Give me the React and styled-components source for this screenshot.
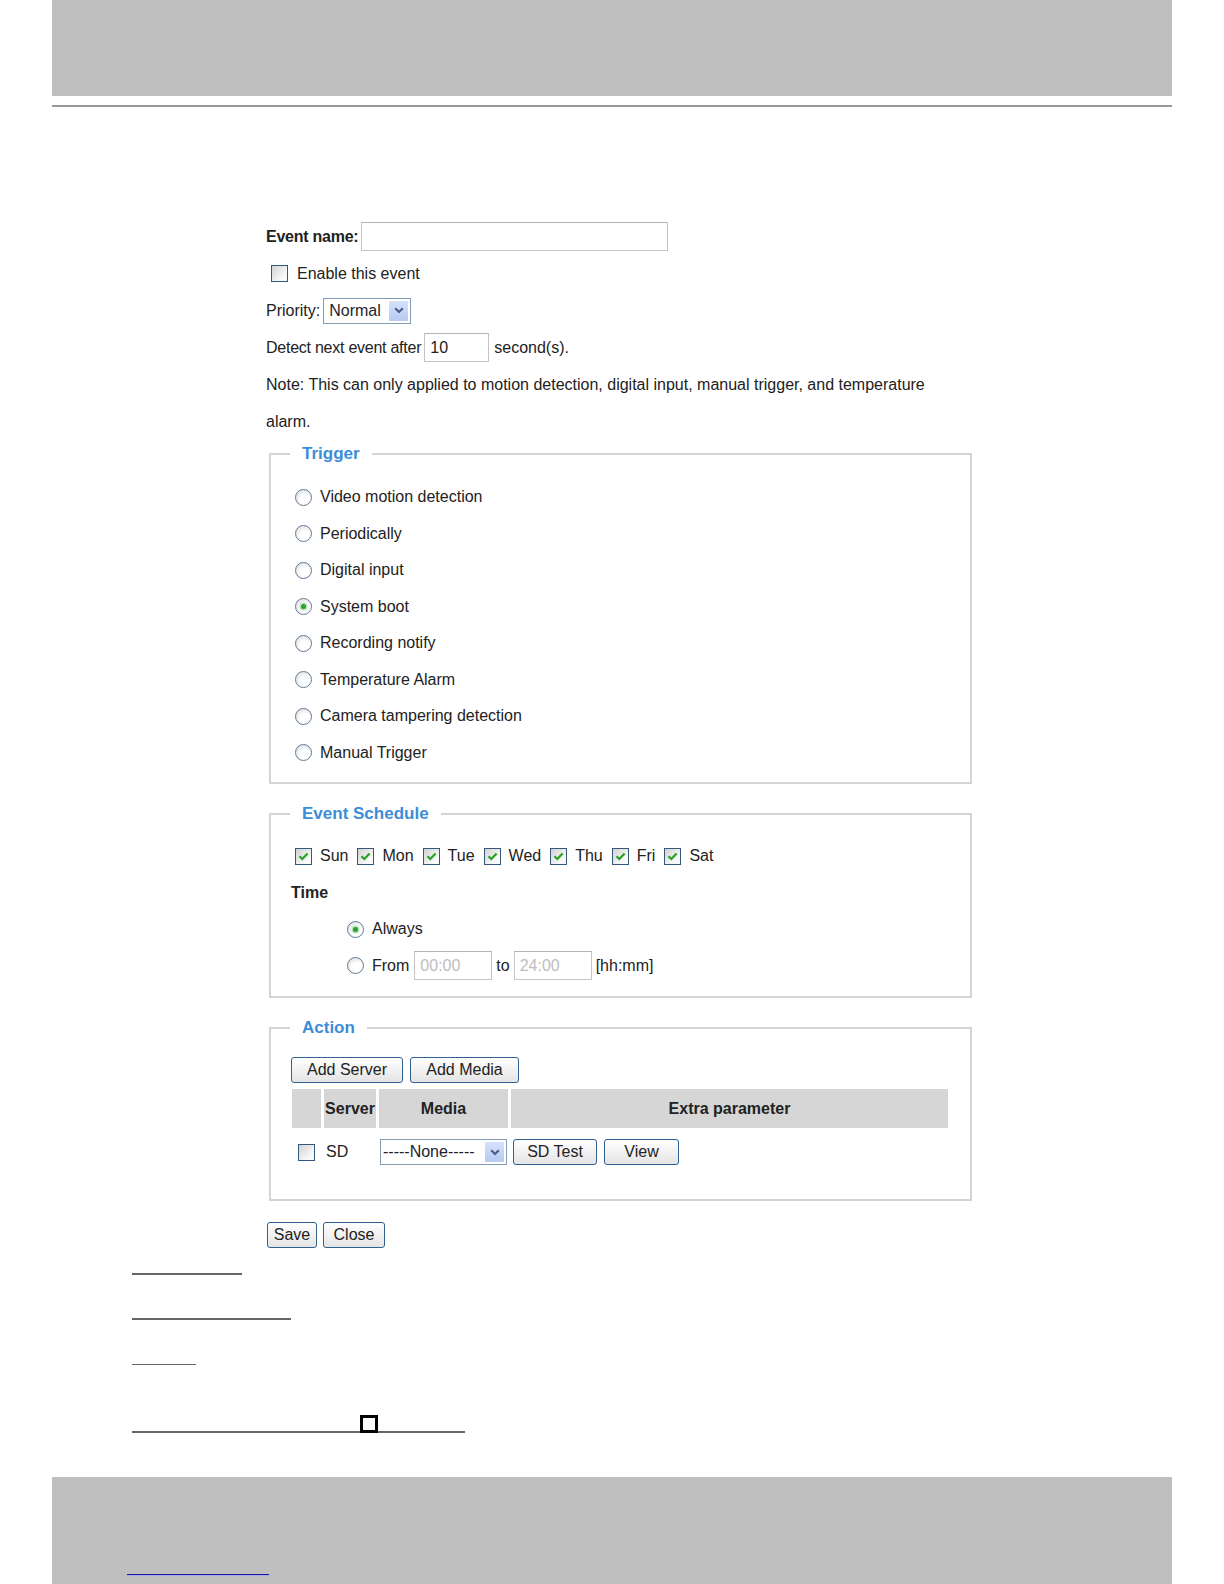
import React from 'react';
import styled, { createGlobalStyle } from 'styled-components';

const GlobalStyle = createGlobalStyle`
  html, body {
    margin: 0;
    padding: 0;
    background: #fff;
    overflow: hidden;
  }
  body {
    font-family: "Liberation Sans", Arial, sans-serif;
    font-size: 16px;
    color: #222;
  }
`;

const Page = styled.div`
  width: 1224px;
`;

const Band = styled.div`
  margin-left: 52px;
  width: 1120px;
  height: ${(p) => p.$h}px;
  margin-top: ${(p) => p.$top || 0}px;
  background: #bfbfbf;
  box-sizing: border-box;
`;

const HeaderRule = styled.div`
  margin: 9px 0 0 52px;
  width: 1120px;
  height: 2px;
  background: #999;
`;

const Form = styled.div`
  margin: 111px 0 0 266px;
  width: 706px;
`;

const Row = styled.div`
  display: flex;
  align-items: center;
  height: ${(p) => p.$h || 37}px;
  gap: ${(p) => (p.$gap === undefined ? 5 : p.$gap)}px;
  padding-left: ${(p) => p.$indent || 0}px;
`;

const Strong = styled.span`
  font-weight: bold;
  margin-left: ${(p) => p.$shift || 0}px;
`;

// the labels before the two top inputs run a little tighter in the original
const Tight = styled.span`
  letter-spacing: -0.25px;
  font-weight: ${(p) => (p.$bold ? 'bold' : 'normal')};
`;

const Note = styled.p`
  margin: 0;
  max-width: 680px;
  line-height: 37px;
`;

const TextBox = styled.input`
  box-sizing: border-box;
  width: ${(p) => p.$w}px;
  height: 29px;
  margin-left: ${(p) => p.$ml || 0}px;
  border: 1px solid #c4c4c4;
  border-top-color: #b4b4b4;
  padding: 0 5px;
  font: inherit;
  color: #222;
  background: #fff;
  outline: none;

  &:disabled {
    color: #bdbdbd;
    background: #fff;
  }
`;

const SelectBox = styled.div`
  box-sizing: border-box;
  display: inline-flex;
  align-items: center;
  justify-content: space-between;
  width: ${(p) => p.$w}px;
  height: 26px;
  padding: 2px 2px 2px ${(p) => p.$pad}px;
  border: 1px solid #7f9db9;
  background: #fff;
  color: #1d1d2e;
  white-space: nowrap;
`;

const SelectArrow = styled.span`
  align-self: stretch;
  width: 19px;
  display: flex;
  align-items: center;
  justify-content: center;
  background: linear-gradient(#d6e1fb, #b7caf3);
  border-radius: 1px;
`;

const Box = styled.span`
  box-sizing: border-box;
  flex-shrink: 0;
  width: 17px;
  height: 17px;
  display: inline-flex;
  align-items: center;
  justify-content: center;
  border: 1px solid #35597c;
  background: linear-gradient(135deg, #d2d2d2, #f9f9f9 75%);
`;

const Round = styled.span`
  box-sizing: border-box;
  flex-shrink: 0;
  width: 17px;
  height: 17px;
  border-radius: 50%;
  display: inline-flex;
  align-items: center;
  justify-content: center;
  border: 1px solid #5d7a97;
  background: radial-gradient(circle at 62% 66%, #fff 0 35%, #d6d6d6 100%);

  &::after {
    content: '';
    display: ${(p) => (p.$on ? 'block' : 'none')};
    width: 5px;
    height: 5px;
    border-radius: 50%;
    background: #2e9e2e;
    box-shadow: 0 0 0 1.5px #b9e3b9;
  }
`;

const Choice = styled.label`
  display: inline-flex;
  align-items: center;
  gap: ${(p) => p.$gap || 8}px;
`;

const Button = styled.button`
  box-sizing: border-box;
  width: ${(p) => p.$w}px;
  height: 26px;
  padding: 0;
  border: 1px solid #31608f;
  border-radius: 3px;
  background: linear-gradient(#ffffff, #e4e4e4);
  font: inherit;
  color: #222;
  cursor: pointer;
`;

const Group = styled.fieldset`
  box-sizing: border-box;
  width: 703px;
  min-width: 0;
  margin: ${(p) => p.$top}px 0 0 3px;
  padding: 0;
  border: 2px solid #d4d4d4;
`;

const GroupTitle = styled.legend`
  margin-left: 19px;
  padding: 0 12px;
  font-size: 17px;
  line-height: 20px;
  font-weight: bold;
  color: #3c8dd9;
`;

const GroupBody = styled.div`
  padding: ${(p) => p.$pad};
`;

const DayList = styled.div`
  display: flex;
  align-items: center;
  height: 36.5px;
  gap: 9px;
`;

const ButtonRow = styled.div`
  display: flex;
  gap: 7px;
`;

const ActionTable = styled.table`
  border-collapse: separate;
  border-spacing: 3px;
  table-layout: fixed;
  width: 662px;
  margin: 3px 0 0 -2px;
`;

const HeadCell = styled.th`
  width: ${(p) => p.$w}px;
  height: 39px;
  padding: 0;
  background: #d6d6d6;
  font-weight: bold;
  text-align: center;
`;

const Cell = styled.td`
  height: 42px;
  padding: 0 0 0 ${(p) => p.$pad || 0}px;
  vertical-align: middle;
`;

const Inline = styled.div`
  display: flex;
  align-items: center;
  gap: ${(p) => p.$gap || 7}px;
`;

const SaveRow = styled.div`
  display: flex;
  gap: 6px;
  margin-top: 21px;
  padding-left: 1px;
`;

const Underline = styled.div`
  margin: ${(p) => p.$top}px 0 0 132px;
  width: ${(p) => p.$w}px;
  height: ${(p) => p.$h}px;
  background: #666;
`;

const MarkedLine = styled.div`
  display: flex;
  margin: 50px 0 0 132px;
  width: 333px;
  height: 16px;
  border-bottom: 2px solid #666;
`;

const Marker = styled.span`
  flex-shrink: 0;
  box-sizing: border-box;
  margin-left: 228px;
  width: 18px;
  height: 18px;
  border: 3px solid #000;
`;

const FooterBand = styled(Band)`
  padding: 97px 0 0 75px;
`;

const LinkLine = styled.div`
  width: 142px;
  height: 1px;
  background: #16169c;
  box-shadow: 0 1px 0 #a9a9ee;
`;

const Checkbox = ({ checked }) => (
  <Box>
    {checked && (
      <svg width="11" height="9" viewBox="0 0 11 9">
        <path d="M1.5 4.2 L4.3 7 L9.6 1.4" stroke="#25a425" strokeWidth="2.2" fill="none" />
      </svg>
    )}
  </Box>
);

const Select = ({ value, width, pad }) => (
  <SelectBox $w={width} $pad={pad}>
    <span>{value}</span>
    <SelectArrow>
      <svg width="10" height="7" viewBox="0 0 10 7">
        <path d="M1.2 1.2 L5 5 L8.8 1.2" stroke="#4b5f86" strokeWidth="2.2" fill="none" />
      </svg>
    </SelectArrow>
  </SelectBox>
);

const triggers = [
  'Video motion detection',
  'Periodically',
  'Digital input',
  'System boot',
  'Recording notify',
  'Temperature Alarm',
  'Camera tampering detection',
  'Manual Trigger',
];

const days = ['Sun', 'Mon', 'Tue', 'Wed', 'Thu', 'Fri', 'Sat'];

export default function App() {
  return (
    <Page>
      <GlobalStyle />
      <Band $h={96} />
      <HeaderRule />

      <Form>
        <Row $gap={3}>
          <Tight $bold>Event name:</Tight>
          <TextBox $w={307} readOnly value="" />
        </Row>
        <Row $indent={5} $gap={0}>
          <Choice $gap={9}>
            <Checkbox />
            Enable this event
          </Choice>
        </Row>
        <Row $gap={3}>
          Priority:
          <Select value="Normal" width={88} pad={5} />
        </Row>
        <Row $gap={5}>
          <Tight>Detect next event after</Tight>
          <TextBox $w={65} $ml={-2} readOnly value="10" />
          second(s).
        </Row>
        <Note>
          Note: This can only applied to motion detection, digital input, manual trigger, and temperature
          alarm.
        </Note>

        <Group $top={4}>
          <GroupTitle>Trigger</GroupTitle>
          <GroupBody $pad="15px 0 11px 24px">
            {triggers.map((t) => (
              <Row key={t} $h={36.5}>
                <Choice>
                  <Round $on={t === 'System boot'} />
                  {t}
                </Choice>
              </Row>
            ))}
          </GroupBody>
        </Group>

        <Group $top={20}>
          <GroupTitle>Event Schedule</GroupTitle>
          <GroupBody $pad="14px 0 12px 24px">
            <DayList>
              {days.map((d) => (
                <Choice key={d}>
                  <Checkbox checked />
                  {d}
                </Choice>
              ))}
            </DayList>
            <Row $h={36.5}>
              <Strong $shift={-4}>Time</Strong>
            </Row>
            <Row $h={36.5} $indent={52}>
              <Choice>
                <Round $on />
                Always
              </Choice>
            </Row>
            <Row $h={36.5} $indent={52} $gap={4}>
              <Choice>
                <Round />
                From
              </Choice>
              <TextBox $w={78} $ml={1} disabled value="00:00" readOnly />
              to
              <TextBox $w={78} disabled value="24:00" readOnly />
              [hh:mm]
            </Row>
          </GroupBody>
        </Group>

        <Group $top={20}>
          <GroupTitle>Action</GroupTitle>
          <GroupBody $pad="19px 0 23px 20px">
            <ButtonRow>
              <Button $w={112}>Add Server</Button>
              <Button $w={109}>Add Media</Button>
            </ButtonRow>
            <ActionTable>
              <thead>
                <tr>
                  <HeadCell $w={29} />
                  <HeadCell $w={52}>Server</HeadCell>
                  <HeadCell $w={129}>Media</HeadCell>
                  <HeadCell $w={437}>Extra parameter</HeadCell>
                </tr>
              </thead>
              <tbody>
                <tr>
                  <Cell $pad={6}>
                    <Inline>
                      <Checkbox />
                    </Inline>
                  </Cell>
                  <Cell $pad={2}>SD</Cell>
                  <Cell $pad={1}>
                    <Select value="-----None-----" width={127} pad={2} />
                  </Cell>
                  <Cell $pad={2}>
                    <Inline>
                      <Button $w={84}>SD Test</Button>
                      <Button $w={75}>View</Button>
                    </Inline>
                  </Cell>
                </tr>
              </tbody>
            </ActionTable>
          </GroupBody>
        </Group>

        <SaveRow>
          <Button $w={50}>Save</Button>
          <Button $w={62}>Close</Button>
        </SaveRow>
      </Form>

      <Underline $top={25} $w={110} $h={2} />
      <Underline $top={43} $w={159} $h={2} />
      <Underline $top={44} $w={64} $h={1} />
      <MarkedLine>
        <Marker />
      </MarkedLine>

      <FooterBand $h={107} $top={44}>
        <LinkLine />
      </FooterBand>
    </Page>
  );
}
